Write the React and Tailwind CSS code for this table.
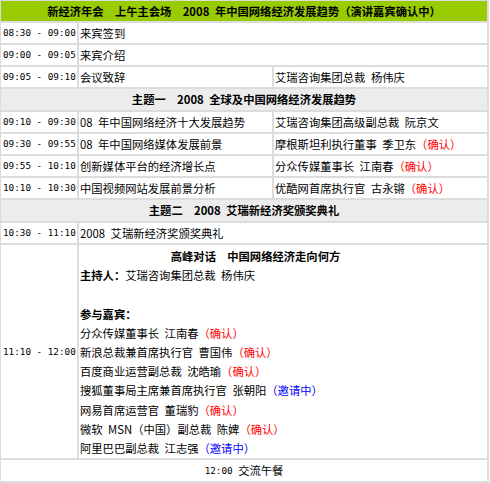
import React from 'react';

const cjk = "font-['Noto_Sans_CJK_SC',sans-serif]";
const mono = "font-['DejaVu_Sans_Mono',monospace] text-[9.3px] [word-spacing:0px] whitespace-nowrap";

const Ok = () => <span className="text-[#ff0000]">（确认）</span>;
const Inviting = () => <span className="text-[#0000ff]">（邀请中）</span>;

const Time = ({ children, tall }) => (
  <div className={`bg-white flex items-center pl-[2px] overflow-hidden ${tall ? '' : 'h-[20px]'} ${mono}`}>{children}</div>
);

const Cell = ({ children, span }) => (
  <div className={`bg-white flex items-center pl-px h-[20px] whitespace-nowrap ${span ? 'col-span-2' : ''}`}>{children}</div>
);

const Theme = ({ children }) => (
  <div className="col-span-3 bg-[#ececec] h-[21px] flex items-center justify-center font-bold">{children}</div>
);

const sessions = [
  { time: '09:10 - 09:30', topic: '08 年中国网络经济十大发展趋势', who: <>艾瑞咨询集团高级副总裁 阮京文</> },
  { time: '09:30 - 09:55', topic: '08 年中国网络媒体发展前景', who: <>摩根斯坦利执行董事 季卫东<Ok /></> },
  { time: '09:55 - 10:10', topic: '创新媒体平台的经济增长点', who: <>分众传媒董事长 江南春<Ok /></> },
  { time: '10:10 - 10:30', topic: '中国视频网站发展前景分析', who: <>优酷网首席执行官 古永锵<Ok /></> },
];

const guests = [
  <>分众传媒董事长 江南春<Ok /></>,
  <>新浪总裁兼首席执行官 曹国伟<Ok /></>,
  <>百度商业运营副总裁 沈皓瑜<Ok /></>,
  <>搜狐董事局主席兼首席执行官 张朝阳<Inviting /></>,
  <>网易首席运营官 董瑞豹<Ok /></>,
  <>微软 MSN（中国）副总裁 陈婢<Ok /></>,
  <>阿里巴巴副总裁 江志强<Inviting /></>,
];

export default function App() {
  return (
    <div className={`w-[490px] h-[483px] bg-white text-black text-[11.3px] [word-spacing:3px] ${cjk}`}>
      <div className="w-[489px] grid grid-cols-[76px_193px_213px] gap-[2px] bg-[#dcdcdc] pt-px pl-px pr-[2px] pb-[2px]">
        {/* header */}
        <div className="col-span-3 bg-[#99cc00] h-[20px] flex items-center justify-center font-bold whitespace-nowrap">
          新经济年会　上午主会场　2008 年中国网络经济发展趋势（演讲嘉宾确认中）
        </div>

        <Time>08:30 - 09:00</Time>
        <Cell span>来宾签到</Cell>
        <Time>09:00 - 09:05</Time>
        <Cell span>来宾介绍</Cell>
        <Time>09:05 - 09:10</Time>
        <Cell>会议致辞</Cell>
        <Cell>艾瑞咨询集团总裁 杨伟庆</Cell>

        <Theme>主题一　2008 全球及中国网络经济发展趋势</Theme>

        {sessions.map(s => (
          <React.Fragment key={s.time}>
            <Time>{s.time}</Time>
            <Cell>{s.topic}</Cell>
            <Cell>{s.who}</Cell>
          </React.Fragment>
        ))}

        <Theme>主题二　2008 艾瑞新经济奖颁奖典礼</Theme>

        <Time>10:30 - 11:10</Time>
        <Cell span>2008 艾瑞新经济奖颁奖典礼</Cell>

        {/* panel discussion */}
        <Time tall>11:10 - 12:00</Time>
        <div className="col-span-2 bg-white h-[213px] pt-[2px] pl-px leading-[19.2px] whitespace-nowrap">
          <div className="text-center font-bold pr-[56px]">高峰对话　中国网络经济走向何方</div>
          <div><span className="font-bold">主持人：</span>艾瑞咨询集团总裁 杨伟庆</div>
          <div>&nbsp;</div>
          <div className="font-bold">参与嘉宾：</div>
          {guests.map((g, i) => <div key={i}>{g}</div>)}
        </div>

        <div className="col-span-3 bg-white h-[21px] flex items-center justify-center">
          <span className={mono}>12:00</span>&nbsp;交流午餐
        </div>
      </div>
    </div>
  );
}
